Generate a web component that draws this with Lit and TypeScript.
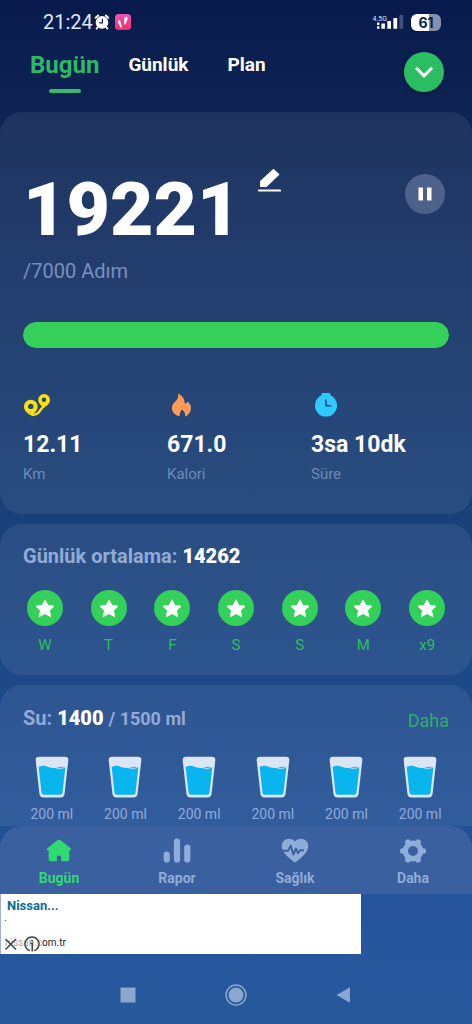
import { LitElement, html, css, svg } from "lit";
import { customElement, state } from "lit/decorators.js";
import { classMap } from "lit/directives/class-map.js";

const icons = {
  alarm: svg`<svg viewBox="0 0 16 16" width="16" height="16"><circle cx="8" cy="8.400" r="6.300" fill="#fff"/><path d="M1.700 3.800 4.200 1.500M14.300 3.800 11.800 1.500M3.600 13.200 2.600 14.600M12.400 13.200 13.400 14.600" stroke="#fff" stroke-width="1.900" stroke-linecap="round"/><path d="M8.400 4.800V8.800H5.200" fill="none" stroke="#0b1f50" stroke-width="1.200"/></svg>`,
  steps: svg`<svg viewBox="0 0 16 16" width="16" height="16"><defs><linearGradient id="pk" x1="0" y1="0" x2="0" y2="1"><stop stop-color="#f44fb4"/><stop offset="1" stop-color="#f02f6a"/></linearGradient></defs><rect width="16" height="16" rx="3.500" fill="url(#pk)"/><path d="M3.100 6.600C4.800 5.800 5.700 7 5.600 8.600L6.400 10.900C7.400 12.600 6.900 13.800 6 13.400 5.200 13.200 4.800 12.200 4.600 10.900 3 9.400 2.600 7.600 3.100 6.600ZM9.900 3.100C11.800 2.200 12.900 3.200 12.600 5L11.300 8.200C10.800 10.300 9.900 11 9.100 10.400 8.700 9.800 8.800 8.800 9.500 7.900L9.300 5.600C9.100 4.600 9.300 3.600 9.900 3.100Z" fill="#fff"/></svg>`,
  signal: svg`<svg viewBox="0 0 27 14" width="27" height="14"><path d="M0 7.500h2.400v2.400H0zM0 11.300h2.400v2.400H0zM4.400 8.500h3.500v5.300H4.400zM10.300 6h3.700v7.800H10.300zM16.400 3h3.800v10.800H16.400z" fill="#fff"/><path d="M22.400 0h3.800v13.800h-3.800z" fill="#40517c"/></svg>`,
  chevron: svg`<svg viewBox="0 0 20 12" width="20" height="12"><path d="M2 1.800 10 9.800 18 1.800" fill="none" stroke="#fff" stroke-width="3"/></svg>`,
  edit: svg`<svg viewBox="0 0 24 24" width="24" height="24"><path d="M16.500.8 21.600 5.400 9.300 17.200H3.800V12.300Z" fill="#fff" stroke="#fff" stroke-width="1.400" stroke-linejoin="round"/><path d="M2 21.500H23" stroke="#fff" stroke-width="2.200" stroke-linecap="round"/></svg>`,
  pause: svg`<svg viewBox="0 0 14 14" width="14" height="14"><path d="M.5.500h4.500v13H.5zM9 .5h4.500v13H9z" fill="#fff"/></svg>`,
  route: svg`<svg viewBox="0 0 28 24" width="28" height="24"><path d="M8.500 22C14 22 16 20 17.500 17 18.500 15 20 14.500 21 12.800" fill="none" stroke="#fbe20c" stroke-width="2.600"/><path fill-rule="evenodd" d="M8 22.500C3.400 20 .9 16.800.9 13.700a6.900 6.900 0 0 1 13.800 0C14.700 16.800 12.200 20 8 22.500ZM7.800 10.700a2.700 2.700 0 1 0 0 5.400 2.700 2.700 0 0 0 0-5.400ZM21 14.500C17.300 12.200 15.200 10 15.200 6.900a5.900 5.900 0 0 1 11.800 0C27 10 24.700 12.200 21 14.500ZM21 4.500a2.200 2.200 0 1 0 0 4.400A2.200 2.200 0 0 0 21 4.500Z" fill="#fbe20c"/></svg>`,
  fire: svg`<svg viewBox="0 0 28 24" width="28" height="24"><path d="M11 .4C15.500 2.600 17.800 6.400 17.700 10.800 19.300 10.600 20 9.700 20.500 8.500 23 10.800 24.600 13 23.900 16.600 23.100 20.400 20.800 22.600 18.200 23.500 18.400 21 17.500 18.900 15.300 16.500 13.400 18 12.600 20 12.700 23.200 8 22.300 4.900 19.400 4.900 15 4.900 10 9.700 8.500 10.900 4.700 11.300 3 11.200 1.600 11 .4Z" fill="#fd9a56"/></svg>`,
  clock: svg`<svg viewBox="0 0 28 24" width="28" height="24"><rect x="10.500" y="0" width="9" height="4" rx="1.500" fill="#2fcaff"/><circle cx="15" cy="12.600" r="11" fill="#2fcaff"/><path d="M14.200 6.500H15.400L15.900 11.700 20.500 12.200V13.400H14.200Z" fill="#1c4379"/></svg>`,
  star: svg`<svg viewBox="0 0 36 36" width="36" height="36"><circle cx="18" cy="18" r="18" fill="#33d159"/><path d="M18 9.800 20.700 15.300 27 16.200 22.500 20.500 23.700 26.600 18 23.600 12.300 26.600 13.500 20.500 9 16.200 15.300 15.300Z" fill="#fff" stroke="#fff" stroke-linejoin="round"/></svg>`,
  glass: svg`<svg viewBox="0 0 34 42" width="34" height="42"><path d="M4 .8H30Q33.700.8 33.300 4.500L29.600 37.500Q29.100 41.500 25.600 41.500H8.400Q4.900 41.500 4.400 37.500L.7 4.500Q.3.800 4 .8Z" fill="#dce5f3"/><path d="M3.700 11Q8 8.800 12.500 10.700 18 13 23 11.500 27 10 30.300 11.400L27.500 36.500Q27.200 38.800 25.200 38.800H8.800Q6.800 38.800 6.500 36.500Z" fill="#08b5ee"/><path d="M20 12.200Q26 12.200 30.300 10.700V11.400Q25 14.500 20 12.200Z" fill="#9bd9f2"/></svg>`,
  home: svg`<svg viewBox="0 0 28 26" width="28" height="26"><path d="M12.700 2Q14 1 15.300 2L26 10.500Q27 12 25.200 12.200H24.300V21.300Q24.300 23.300 22.300 23.300H16.200V19.500Q16.200 17.500 14 17.500 11.800 17.500 11.800 19.500V23.300H5.700Q3.700 23.300 3.700 21.300V12.200H2.800Q1 12 2 10.500Z" fill="currentColor"/></svg>`,
  report: svg`<svg viewBox="0 0 28 26" width="28" height="26"><path d="M3.700 16.500V21.500M14 3.500V21.500M24.300 9.500V21.500" stroke="currentColor" stroke-width="6.200" stroke-linecap="round"/></svg>`,
  heart: svg`<svg viewBox="0 0 28 26" width="28" height="26"><path d="M14 24.500C7 19.600.8 14.300.8 8 .8 1.200 9.500-1.800 14 3.400 18.500-1.800 27.200 1.200 27.200 8 27.200 14.300 21 19.600 14 24.500Z" fill="currentColor"/><path d="M1 12.800H7L9.700 7.600 12.300 16.500 15 10.500 17 15.200 19 12.300H23" fill="none" stroke="#3b609f" stroke-width="1.900" stroke-linejoin="round"/></svg>`,
  gear: svg`<svg viewBox="0 0 28 26" width="28" height="26"><circle cx="14" cy="13" r="7.700" fill="none" stroke="currentColor" stroke-width="5.400"/><path d="M23 13H24.300M5 13H3.700M18.500 5.200 19.100 4.100M9.500 20.800 8.900 21.900M9.500 5.200 8.900 4.100M18.500 20.800 19.100 21.900" stroke="currentColor" stroke-width="5.600" stroke-linecap="round"/></svg>`,
  close: svg`<svg viewBox="0 0 14 14" width="14" height="14"><path d="M1.500 2 12 12.500M12 2 1.500 12.500" stroke="#444" stroke-width="1.500"/></svg>`,
  info: svg`<svg viewBox="0 0 16 16" width="16" height="16"><path d="M6 14.700A7 7 0 1 1 10 14.700" fill="none" stroke="#444" stroke-width="1.400"/><path d="M6.500 7.300H8.200V15.500M8.200 4V5.400" fill="none" stroke="#444" stroke-width="1.500"/></svg>`,
  square: svg`<svg viewBox="0 0 22 22" width="22" height="22"><rect x="3.500" y="3.500" width="15" height="15" rx=".5" fill="#8aa7d0"/></svg>`,
  circle: svg`<svg viewBox="0 0 22 22" width="22" height="22"><circle cx="11" cy="11" r="10" fill="none" stroke="#8aa7d0" stroke-width="1.500"/><circle cx="11" cy="11" r="7.500" fill="#8aa7d0"/></svg>`,
  back: svg`<svg viewBox="0 0 22 22" width="22" height="22"><path d="M3.500 11 17 3.200V18.800Z" fill="#8aa7d0"/></svg>`,
};

@customElement("app-root")
export class AppRoot extends LitElement {
  @state() private tab = "Bugün";
  @state() private section = "Bugün";

  private tabs = ["Bugün", "Günlük", "Plan"];
  private stats = [
    { icon: icons.route, value: "12.11", label: "Km" },
    { icon: icons.fire, value: "671.0", label: "Kalori" },
    { icon: icons.clock, value: "3sa 10dk", label: "Süre" },
  ];
  private days = ["W", "T", "F", "S", "S", "M", "x9"];
  private glasses = [200, 200, 200, 200, 200, 200];
  private sections = [
    { icon: icons.home, label: "Bugün" },
    { icon: icons.report, label: "Rapor" },
    { icon: icons.heart, label: "Sağlık" },
    { icon: icons.gear, label: "Daha" },
  ];
  private steps = 19221;
  private goal = 7000;

  static styles = css`
    :host {
      display: flex;
      flex-direction: column;
      min-height: 100vh;
      box-sizing: border-box;
      color: #fff;
      font-family: Roboto, "Noto Sans", sans-serif;
      background: linear-gradient(#081a4c 0, #0e2454 11%, #194078 50%, #24539a 85%, #28599d 100%);
    }
    svg { display: block; flex: none; }
    button {
      border: 0;
      padding: 0;
      margin: 0;
      background: none;
      color: inherit;
      font: inherit;
      cursor: pointer;
    }
    a { text-decoration: none; color: inherit; }
    h2, p, ul { margin: 0; padding: 0; list-style: none; }

    .status {
      display: flex;
      align-items: center;
      height: 44px;
      padding: 0 31px 0 43px;
    }
    .time { font-size: 20px; line-height: 24px; color: #dfe8fb; margin-right: 1px; }
    .status-icons { display: flex; align-items: center; gap: 5px; flex: 1; }
    .network { display: flex; align-items: center; }
    .net-type { font-size: 7px; line-height: 8px; align-self: flex-start; color: #dfe8fb; margin-right: -10px; }
    .signal { margin-right: 7px; }
    .battery {
      width: 30px;
      height: 17px;
      border-radius: 6px;
      background: linear-gradient(90deg, #fff 61%, #8490b0 61%);
      color: #0b1f50;
      font: 700 14px/17px Inter, sans-serif;
      text-align: center;
    }

    header {
      display: flex;
      align-items: flex-start;
      justify-content: space-between;
      height: 68px;
      padding: 0 28px 0 30px;
      box-sizing: border-box;
    }
    .tabs { display: flex; gap: 19px; }
    .tab {
      display: flex;
      flex-direction: column;
      align-items: center;
      padding: 7px 10px 0;
      font-size: 19px;
      line-height: 28px;
      font-weight: 700;
    }
    .tab.active { color: #2fb765; font-size: 24px; padding: 7px 0 0; }
    .tab.active::after {
      content: "";
      width: 32px;
      height: 4px;
      margin-top: 10px;
      border-radius: 2px;
      background: #36bd6b;
    }
    .round { display: grid; place-items: center; width: 40px; height: 40px; border-radius: 50%; }
    .expand { margin-top: 8px; background: #2bbd62; box-shadow: 0 1px 4px #04102e99; }

    main { display: flex; flex-direction: column; gap: 10px; flex: 1; }
    .card { border-radius: 22px; background: rgba(255, 255, 255, 0.07); }

    .today { padding: 57px 23px 30px; }
    .count-row { display: flex; align-items: flex-start; }
    .count { font-size: 75px; line-height: 80px; font-weight: 900; margin-right: 17px; }
    .pause { margin: 5px 4px 0 auto; background: #4e618b; }
    .goal { margin-top: 10px; font-size: 20px; line-height: 24px; color: #7990bc; }
    .progress { height: 26px; margin-top: 39px; border-radius: 13px; background: #1a3564; overflow: hidden; }
    .bar { height: 100%; border-radius: 13px; background: #35d05a; }
    .stats { display: grid; grid-template-columns: repeat(3, 1fr); margin: 45px -6px 0 0; }
    .value { margin-top: 14px; font-size: 23px; line-height: 28px; font-weight: 700; }
    .label { margin-top: 5px; font-size: 15px; line-height: 20px; color: #7089b8; }

    .average { padding: 20px 13px; }
    .title { padding: 0 10px; font-size: 20px; line-height: 24px; font-weight: 700; color: #92abd6; }
    .title b { color: #fff; }
    .title small { font-size: 18px; font-weight: 700; }
    .days { display: grid; grid-template-columns: repeat(7, 1fr); margin-top: 22px; }
    .day { display: flex; flex-direction: column; align-items: center; gap: 9px; font-size: 15px; line-height: 20px; color: #2fbf63; }

    .water { padding: 21px 15px 3px; border-radius: 22px 22px 0 0; flex: 1; }
    .water-head { display: flex; justify-content: space-between; align-items: flex-start; padding: 0 8px; }
    .water-head .title { padding: 0; }
    .more { font-size: 18px; line-height: 24px; color: #2fae6a; margin-top: 3px; }
    .glasses { display: grid; grid-template-columns: repeat(6, 1fr); margin-top: 23px; }
    .glass { display: flex; flex-direction: column; align-items: center; gap: 7px; font-size: 14px; line-height: 18px; color: #8faade; }

    .nav {
      display: grid;
      grid-template-columns: repeat(4, 1fr);
      border-radius: 22px 22px 0 0;
      background: #3b609f;
    }
    .nav-item {
      display: flex;
      flex-direction: column;
      align-items: center;
      gap: 5px;
      padding: 12px 0 7px;
      color: #8fadd9;
      font-size: 14px;
      line-height: 18px;
      font-weight: 700;
    }
    .nav-item.active { color: #2fdb70; }

    .ad {
      position: relative;
      box-sizing: border-box;
      width: 361px;
      max-width: 100%;
      height: 60px;
      padding: 3px 0 0 6px;
      background: #fff;
      border-left: 1px solid #9fb4d4;
      display: flex;
      flex-direction: column;
    }
    .ad-title { font-size: 13px; line-height: 18px; font-weight: 700; color: #0c6a94; }
    .ad-dot { font-size: 10px; line-height: 6px; margin-left: -3px; color: #333; }
    .ad-link { font-size: 10px; line-height: 12px; margin: auto 0 5px -2px; color: #222; }
    .ad-controls {
      position: absolute;
      left: 0;
      bottom: 2px;
      display: flex;
      align-items: center;
      gap: 6px;
      padding: 0 2px 0 3px;
      background: rgba(255, 255, 255, 0.6);
    }

    .system { display: flex; justify-content: center; align-items: center; gap: 86px; height: 70px; padding-top: 12px; box-sizing: border-box; }
  `;

  render() {
    const percent = Math.min(100, (this.steps / this.goal) * 100);
    return html`
      <div class="status">
        <span class="time">21:24</span>
        <span class="status-icons">${icons.alarm}${icons.steps}</span>
        <span class="network"><span class="net-type">4.5G</span><span class="signal">${icons.signal}</span></span>
        <span class="battery">61</span>
      </div>
      <header>
        <nav class="tabs">
          ${this.tabs.map(
            (name) => html`<button
              class=${classMap({ tab: true, active: name === this.tab })}
              @click=${() => (this.tab = name)}
            >${name}</button>`
          )}
        </nav>
        <button class="round expand" aria-label="Genişlet">${icons.chevron}</button>
      </header>
      <main>
        <section class="card today">
          <div class="count-row">
            <span class="count">${this.steps}</span>
            <button aria-label="Düzenle">${icons.edit}</button>
            <button class="round pause" aria-label="Duraklat">${icons.pause}</button>
          </div>
          <p class="goal">/${this.goal} Adım</p>
          <div class="progress" role="progressbar" aria-label="Adım" aria-valuemin="0" aria-valuemax="100" aria-valuenow=${percent}>
            <div class="bar" style="width:${percent}%"></div>
          </div>
          <div class="stats">
            ${this.stats.map(
              (s) => html`<div>${s.icon}<p class="value">${s.value}</p><p class="label">${s.label}</p></div>`
            )}
          </div>
        </section>
        <section class="card average">
          <h2 class="title">Günlük ortalama: <b>14262</b></h2>
          <ul class="days">
            ${this.days.map((d) => html`<li class="day">${icons.star}<span>${d}</span></li>`)}
          </ul>
        </section>
        <section class="card water">
          <div class="water-head">
            <h2 class="title">Su: <b>1400</b> <small>/ 1500 ml</small></h2>
            <a class="more" href="#su">Daha</a>
          </div>
          <div class="glasses">
            ${this.glasses.map((ml) => html`<button class="glass">${icons.glass}<span>${ml} ml</span></button>`)}
          </div>
        </section>
      </main>
      <nav class="nav">
        ${this.sections.map(
          (s) => html`<button
            class=${classMap({ "nav-item": true, active: s.label === this.section })}
            @click=${() => (this.section = s.label)}
          >${s.icon}<span>${s.label}</span></button>`
        )}
      </nav>
      <aside class="ad">
        <a class="ad-title" href="#nissan">Nissan...</a>
        <span class="ad-dot">.</span>
        <a class="ad-link" href="#nissan">nissan.com.tr</a>
        <div class="ad-controls">
          <button aria-label="Kapat">${icons.close}</button>
          <button aria-label="Bilgi">${icons.info}</button>
        </div>
      </aside>
      <div class="system">
        <button aria-label="Son uygulamalar">${icons.square}</button>
        <button aria-label="Ana ekran">${icons.circle}</button>
        <button aria-label="Geri">${icons.back}</button>
      </div>
    `;
  }
}
